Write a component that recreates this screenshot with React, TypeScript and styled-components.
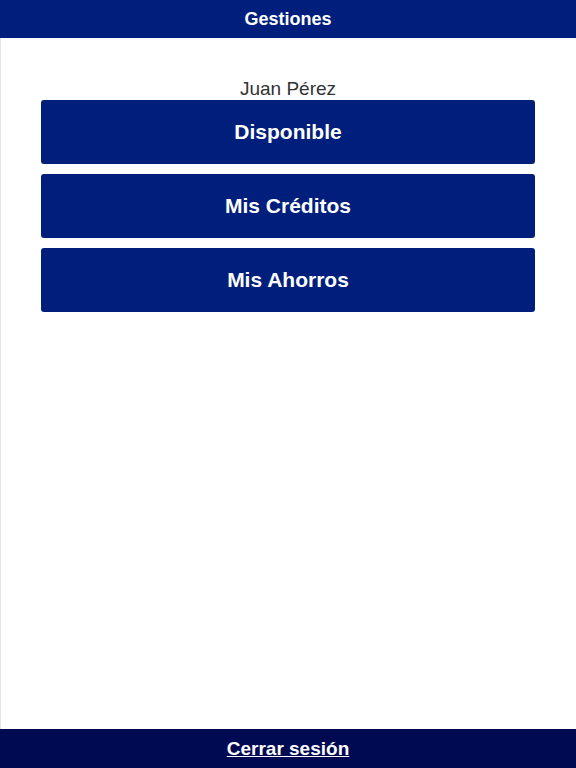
import React from "react";
import styled, { createGlobalStyle } from "styled-components";

const GlobalStyle = createGlobalStyle`
  html, body {
    margin: 0;
    padding: 0;
    background: #ffffff;
    font-family: "Liberation Sans", Arial, sans-serif;
  }
`;

const Page = styled.div`
  min-height: 100vh;
  display: flex;
  flex-direction: column;
`;

const Header = styled.header`
  height: 38px;
  background: #001e7c;
  color: #ffffff;
  display: flex;
  align-items: center;
  justify-content: center;
  font-size: 18px;
  font-weight: bold;
`;

const Main = styled.main`
  flex: 1;
  display: flex;
  flex-direction: column;
  padding: 40px 41px 0 40px;
  border-left: 1px solid #e6e6e6;
`;

const UserName = styled.div`
  text-align: center;
  font-size: 19px;
  line-height: 22px;
  color: #333333;
`;

const MenuList = styled.nav`
  display: flex;
  flex-direction: column;
  gap: 10px;
`;

const MenuButton = styled.button`
  height: 64px;
  width: 100%;
  border: none;
  border-radius: 3px;
  background: #001e7c;
  color: #ffffff;
  font-family: "Liberation Sans", Arial, sans-serif;
  font-size: 21px;
  font-weight: bold;
  cursor: pointer;
`;

const Footer = styled.footer`
  height: 39px;
  background: #000a52;
  display: flex;
  align-items: center;
  justify-content: center;
`;

const LogoutLink = styled.a`
  color: #ffffff;
  font-size: 19px;
  font-weight: bold;
  text-decoration: underline;
  cursor: pointer;
`;

const items = ["Disponible", "Mis Créditos", "Mis Ahorros"];

const App = () => {
  return (
    <>
      <GlobalStyle />
      <Page>
        <Header>Gestiones</Header>
        <Main>
          <UserName>Juan Pérez</UserName>
          <MenuList>
            {items.map(label => (
              <MenuButton key={label}>{label}</MenuButton>
            ))}
          </MenuList>
        </Main>
        <Footer>
          <LogoutLink>Cerrar sesión</LogoutLink>
        </Footer>
      </Page>
    </>
  );
};

export default App;
